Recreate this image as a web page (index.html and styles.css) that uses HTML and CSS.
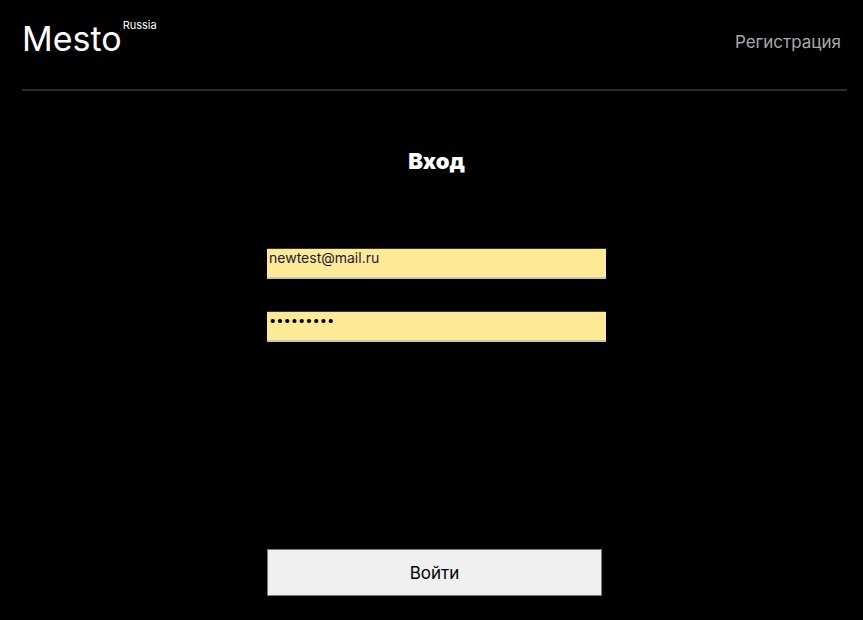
FILE: index.html
```html
<!DOCTYPE html>
<html lang="ru">
<head>
<meta charset="utf-8">
<title>Mesto</title>
<link rel="stylesheet" href="styles.css">
</head>
<body>
<div class="page">
  <header class="header">
    <div class="logo"><span class="logo-main">Mesto</span><span class="logo-sub">Russia</span></div>
    <a class="header-link" href="#">Регистрация</a>
  </header>
  <main class="auth">
    <h1 class="auth-title">Вход</h1>
    <form class="auth-form">
      <div class="field">newtest@mail.ru</div>
      <div class="field field-pass">•••••••••</div>
      <button class="auth-button" type="button">Войти</button>
    </form>
  </main>
</div>
</body>
</html>
```
FILE: styles.css
```css
html, body {
  margin: 0;
  padding: 0;
  background: #000;
}
body {
  font-family: Inter, "Noto Sans", sans-serif;
  color: #fff;
}
.page {
  width: 863px;
  height: 620px;
  overflow: hidden;
}
.header {
  margin: 0 16px 0 22px;
  height: 91px;
  border-bottom: 2px solid #2b2b2b;
  display: flex;
  justify-content: space-between;
  align-items: flex-start;
  box-sizing: border-box;
}
.logo {
  display: flex;
  align-items: flex-start;
  padding-top: 18px;
}
.logo-main {
  font-size: 34px;
  line-height: 42px;
  font-weight: 400;
}
.logo-sub {
  font-size: 11px;
  line-height: 14px;
  margin-top: 0;
  margin-left: 1px;
}
.header-link {
  color: #a9a9a9;
  text-decoration: none;
  font-size: 17px;
  line-height: 22px;
  margin-top: 31px;
  margin-right: 6px;
}
.auth {
  display: flex;
  flex-direction: column;
  align-items: center;
  padding-left: 10px;
}
.auth-title {
  margin: 56px 0 0;
  font-size: 22px;
  line-height: 28px;
  font-weight: 900;
  letter-spacing: -0.1px;
}
.auth-form {
  display: flex;
  flex-direction: column;
  margin-top: 73px;
  width: 339px;
}
.field {
  box-sizing: border-box;
  height: 31px;
  background: #fee996;
  border-top: 1px solid #3b3522;
  border-bottom: 2px solid #c8c4b4;
  color: #1e1b3a;
  font-size: 14px;
  line-height: 18px;
  padding: 0 2px;
}
.field-pass {
  margin-top: 32px;
  font-size: 13px;
  letter-spacing: -0.05px;
  color: #000;
  line-height: 16px;
}
.auth-button {
  margin-top: 207px;
  width: 335px;
  height: 47px;
  background: #efefef;
  border: 1px solid #767676;
  font-family: Inter, "Noto Sans", sans-serif;
  font-size: 17px;
  color: #000;
  padding: 0;
}
```
